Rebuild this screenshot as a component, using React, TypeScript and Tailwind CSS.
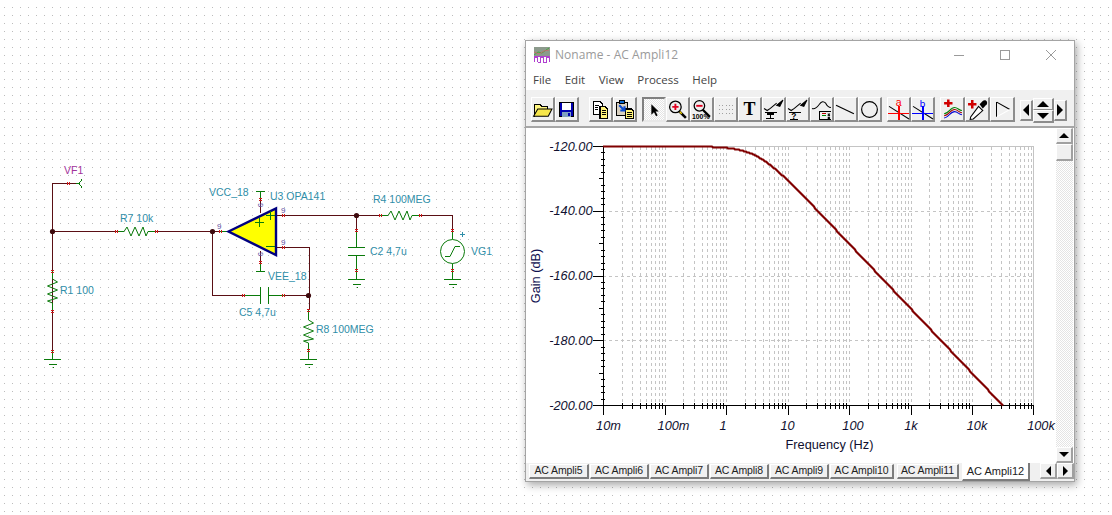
import React from "react";

const WIRE = "#5a0f14";
const GREEN = "#0a7a0a";
const TEAL = "#2f8ea8";

function Pins({ pts }: { pts: [number, number, boolean][] }) {
  return (
    <g stroke="#d01818" strokeWidth="1" shapeRendering="crispEdges">
      {pts.map(([x, y, h], i) =>
        h ? (
          <g key={i}>
            <line x1={x - 1.5} y1={y - 1.5} x2={x - 1.5} y2={y + 1.5} />
            <line x1={x + 0.5} y1={y - 1.5} x2={x + 0.5} y2={y + 1.5} />
          </g>
        ) : (
          <g key={i}>
            <line x1={x - 1.5} y1={y - 1.5} x2={x + 1.5} y2={y - 1.5} />
            <line x1={x - 1.5} y1={y + 0.5} x2={x + 1.5} y2={y + 0.5} />
          </g>
        )
      )}
    </g>
  );
}

function Ground({ x, y }: { x: number; y: number }) {
  return (
    <g stroke={GREEN} strokeWidth="1" shapeRendering="crispEdges">
      <line x1={x - 8.5} y1={y + 0.5} x2={x + 8.5} y2={y + 0.5} />
      <line x1={x - 3.5} y1={y + 5.5} x2={x + 4} y2={y + 5.5} />
      <line x1={x} y1={y + 8} x2={x + 1} y2={y + 8} />
    </g>
  );
}

function Schematic() {
  const w = (d: string) => <path d={d} fill="none" stroke={WIRE} strokeWidth="1" shapeRendering="crispEdges" />;
  const g = (d: string) => <path d={d} fill="none" stroke={GREEN} strokeWidth="1" shapeRendering="crispEdges" />;
  const zz = (d: string) => <path d={d} fill="none" stroke={GREEN} strokeWidth="1" />;
  const Lbl = ({ x, y, c = TEAL, t }: { x: number; y: number; c?: string; t: string }) => (
    <text x={x} y={y} fill={c} fontSize="10.5" fontFamily="'Liberation Sans', Arial, sans-serif">
      {t}
    </text>
  );
  const Nine = ({ x, y }: { x: number; y: number }) => (
    <text x={x} y={y} fill="#5a4aa0" fontSize="8" fontFamily="'Liberation Sans', Arial, sans-serif">
      9
    </text>
  );
  return (
    <svg className="absolute inset-0 w-[1112px] h-[515px]" viewBox="0 0 1112 515">
      <defs>
        <pattern id="dots" x="4" y="7" width="8" height="8" patternUnits="userSpaceOnUse">
          <rect x="0" y="0" width="1" height="1" fill="#bcbcbc" />
        </pattern>
      </defs>
      <rect width="1112" height="515" fill="url(#dots)" />

      {w("M76.5 183.5H52.5V351")}
      {w("M52.5 231.5H117")}
      {w("M156 231.5H220")}
      {w("M212.5 231.5V295.5H244")}
      {w("M284 295.5H309.5")}
      {w("M276 215.5H380")}
      {w("M420 215.5H452.5V231")}
      {w("M356.5 215.5V231")}
      {w("M276 247.5H309.5V310")}
      {w("M260.5 199V213")}
      {w("M260.5 251V263")}
      {w("M52.5 231V271")}
      {g("M76 183.5H80M82 179.5L79 183.5L82 187.5")}
      {g("M117 231.5H124M148 231.5H156")}
      {zz("M124 231.5L127 227L131 236L135 227L139 236L143 227L146 236L148 231.5")}
      {g("M52.5 271V279M52.5 303V311M52.5 351V359")}
      {zz("M52.5 279L57.5 282L47.5 286L57.5 290L47.5 294L57.5 298L47.5 301L52.5 303")}
      {g("M220 231.5H229")}
      {g("M260.5 191V199M260.5 263V271M256 191.5H265M256 271.5H265")}
      {g("M244 295.5H260.5M260.5 287V304M268.5 287V304M268.5 295.5H284")}
      {g("M380 215.5H388M412 215.5H420")}
      {zz("M388 215.5L391 211L395 220L399 211L403 220L407 211L410 220L412 215.5")}
      {g("M356.5 231V247M347.5 247.5H365M347.5 255.5H365M356.5 255V279")}
      <Ground x={356.5} y={279} />
      {g("M452.5 231V239M452.5 263V279")}
      <circle cx="452.5" cy="251.5" r="12" fill="#fff" stroke={GREEN} strokeWidth="1" />
      <path d="M445 256.5H450L455 246.5H460" fill="none" stroke={GREEN} strokeWidth="1" />
      <path d="M459.5 234.5H464.5M462 232V237" stroke="#2f8ea8" strokeWidth="1" shapeRendering="crispEdges" />
      <Ground x={452.5} y={279} />
      {g("M308.5 310V320M308.5 343V351")}
      {zz("M308.5 320L313.5 323L303.5 327L313.5 331L303.5 335L313.5 339L303.5 341L308.5 343")}
      {g("M308.5 351V359")}
      <Ground x={308.5} y={359} />
      <Ground x={52.5} y={359} />

      <polygon points="228.5,231.5 276,208.5 276,255" fill="#ffff00" stroke="#000080" strokeWidth="2.4" strokeLinejoin="miter" />
      <path d="M255 222.5H264M259.5 218V227M266 215.5H275M270.5 211V220M266 246.5H275" stroke={GREEN} strokeWidth="1" shapeRendering="crispEdges" />

      <circle cx="52.5" cy="231.5" r="2.6" fill="#3e0a0e" />
      <circle cx="212.5" cy="231.5" r="2.6" fill="#3e0a0e" />
      <circle cx="356.5" cy="215.5" r="2.6" fill="#3e0a0e" />
      <circle cx="308.5" cy="295.5" r="2.6" fill="#3e0a0e" />

      <Pins
        pts={[
          [69, 183.5, true],
          [117, 231.5, true],
          [157, 231.5, true],
          [221, 231.5, true],
          [244, 295.5, true],
          [284, 295.5, true],
          [284, 215.5, true],
          [284, 247.5, true],
          [381, 215.5, true],
          [421, 215.5, true],
          [52.5, 271.5, false],
          [52.5, 311.5, false],
          [52.5, 351.5, false],
          [260.5, 199.5, false],
          [260.5, 263, false],
          [356.5, 231, false],
          [356.5, 271, false],
          [452.5, 231, false],
          [452.5, 271, false],
          [308.5, 311, false],
          [308.5, 351, false],
        ]}
      />

      <Lbl x={64} y={174} c="#a2329a" t="VF1" />
      <Lbl x={120} y={222} t="R7 10k" />
      <Lbl x={209} y={196} t="VCC_18" />
      <Lbl x={270} y={200} t="U3 OPA141" />
      <Lbl x={373} y={203} t="R4 100MEG" />
      <Lbl x={471} y={255} t="VG1" />
      <Lbl x={370} y={255} t="C2 4,7u" />
      <Lbl x={268} y={280} t="VEE_18" />
      <Lbl x={239} y={316} t="C5 4,7u" />
      <Lbl x={316} y={333} t="R8 100MEG" />
      <Lbl x={60} y={294} t="R1 100" />
      <Nine x={217} y={229} />
      <Nine x={281} y={213} />
      <Nine x={281} y={245} />
      <g transform="translate(258 203) rotate(90)">
        <Nine x={0} y={0} />
      </g>
      <g transform="translate(258 252) rotate(90)">
        <Nine x={0} y={0} />
      </g>
    </svg>
  );
}

function AppIcon() {
  return (
    <svg width="16" height="16" viewBox="0 0 16 16" shapeRendering="crispEdges">
      <rect x="0" y="0" width="16" height="9" fill="#8c9a8c" />
      <rect x="0" y="9" width="16" height="7" fill="#fff" />
      <path d="M0 8L4 5L8 6L15 1" fill="none" stroke="#3fae3f" strokeWidth="1" shapeRendering="auto" />
      <path d="M0 5L5 7L10 4L15 3" fill="none" stroke="#c07070" strokeWidth="1" shapeRendering="auto" />
      <path d="M0.5 15V10.5H3.5V15M3.5 15H6.5V10.5H9.5V15H12.5V10.5H15.5V15" fill="none" stroke="#b040d0" strokeWidth="1" />
      <rect x="0" y="9" width="16" height="1" fill="#b040d0" />
    </svg>
  );
}

function Caption() {
  return (
    <svg width="102" height="12" viewBox="0 0 102 12" stroke="#9a9a9a" fill="none" strokeWidth="1" shapeRendering="crispEdges">
      <path d="M0 6.5H10" />
      <rect x="46" y="1.5" width="9" height="9" />
      <path d="M92 1L102 11M102 1L92 11" shapeRendering="auto" />
    </svg>
  );
}

const Ico = ({ children }: { children: React.ReactNode }) => (
  <svg width="21" height="21" viewBox="0 0 20 20" fill="none" className="shrink-0 overflow-visible">
    {children}
  </svg>
);

function Btn({ children, w = "w-[24px]", pressed = false }: { children?: React.ReactNode; w?: string; pressed?: boolean }) {
  return (
    <div
      className={
        pressed
          ? `${w} h-[25px] flex items-center justify-center border-2 border-t-[#808080] border-l-[#808080] border-r-[#e8e8e8] border-b-[#e8e8e8] bg-[repeating-conic-gradient(#e4e4e4_0%_25%,#ffffff_0%_50%)] bg-size-[2px_2px]`
          : `${w} h-[25px] flex items-center justify-center bg-[#f0f0f0] border-t border-l border-t-white border-l-white border-r-2 border-b-2 border-r-[#8c8c8c] border-b-[#8c8c8c]`
      }
    >
      {children}
    </div>
  );
}

const crisp = { shapeRendering: "crispEdges" as const };

function Toolbar() {
  return (
    <div className="flex items-start h-[38px] shrink-0 pt-[7px] pl-[5px] bg-[#f0f0f0] border-b-2 border-b-[#a6a6a6] mt-[2px]">
      <Btn>
        <Ico>
          <path d="M2.5 5.5H8L10 7.5H15V10H6L2.5 16Z" fill="#fff680" stroke="#000" {...crisp} />
          <path d="M5.5 9.5H19L15.5 16.5H1.5Z" fill="#f6e64a" stroke="#000" />
        </Ico>
      </Btn>
      <Btn>
        <Ico>
          <rect x="3" y="3" width="14" height="14" fill="#0000b0" stroke="#000" {...crisp} />
          <rect x="6" y="4" width="8" height="6" fill="#fff" {...crisp} />
          <rect x="6" y="12" width="8" height="5" fill="#80a0c0" {...crisp} />
          <rect x="11" y="13" width="2" height="3" fill="#0000b0" {...crisp} />
        </Ico>
      </Btn>
      <div className="w-[10px]" />
      <Btn>
        <Ico>
          <path d="M3.5 2.5H9.5L11.5 4.5V14.5H3.5Z" fill="#fff" stroke="#000" {...crisp} />
          <path d="M9.5 7.5H14.5L16.5 9.5V18.5H9.5Z" fill="#fff27a" stroke="#000" {...crisp} />
          <path d="M5 6H9M5 8H8M5 10H8M11 11H15M11 13H15M11 15H15" stroke="#000" {...crisp} />
        </Ico>
      </Btn>
      <Btn>
        <Ico>
          <path d="M2.5 3.5H12.5V15.5H2.5Z" fill="#d8d0c0" stroke="#000" {...crisp} />
          <rect x="5" y="1" width="5" height="3" fill="#0a6ad0" stroke="#000" {...crisp} />
          <path d="M10.5 9.5H16.5L18.5 11.5V18.5H10.5Z" fill="#fff27a" stroke="#000" {...crisp} />
          <path d="M12 13H17M12 15H17M12 17H17" stroke="#000" {...crisp} />
          <path d="M5 6L10 11M10 7V11H6" stroke="#0a4ad0" strokeWidth="2" />
        </Ico>
      </Btn>
      <div className="w-[5px]" />
      <Btn pressed>
        <Ico>
          <path d="M7 5V15L9.5 12.5L11.5 16.5L13 15.5L11 12H14Z" fill="#000" />
        </Ico>
      </Btn>
      <Btn>
        <Ico>
          <path d="M11 11L18 18" stroke="#000" strokeWidth="2.4" />
          <path d="M12 12L14 14" stroke="#f0d000" strokeWidth="1.4" />
          <circle cx="8" cy="7.5" r="5.5" fill="#eee" stroke="#000" strokeWidth="1.2" />
          <path d="M5 7.5H11M8 4.5V10.5" stroke="#e00020" strokeWidth="1.8" />
        </Ico>
      </Btn>
      <Btn>
        <Ico>
          <path d="M11 10L18 17" stroke="#000" strokeWidth="2.2" />
          <circle cx="8" cy="6.5" r="5" fill="#eee" stroke="#000" strokeWidth="1.2" />
          <path d="M5 6.5H11" stroke="#e00020" strokeWidth="1.8" />
          <text x="1" y="19.5" fontSize="6.5" fontWeight="700" fill="#000" fontFamily="'Liberation Sans', sans-serif">
            100%
          </text>
        </Ico>
      </Btn>
      <Btn>
        <Ico>
          <path d="M4 6h1M7 6h1M10 6h1M13 6h1M16 6h1M4 10h1M7 10h1M10 10h1M13 10h1M16 10h1M4 14h1M7 14h1M10 14h1M13 14h1M16 14h1" stroke="#a0a0a0" {...crisp} />
        </Ico>
      </Btn>
      <Btn>
        <span className="font-['Liberation_Serif',serif] font-bold text-[18px] leading-none text-black">T</span>
      </Btn>
      <Btn>
        <Ico>
          <path d="M1 9L4 11L7 9L13 4" stroke="#000" />
          <path d="M13 6L19 1L16 7Z" fill="#000" stroke="#000" />
          <path d="M2 12.5H13" stroke="#000" {...crisp} />
          <path d="M3 18.5H10" stroke="#000" {...crisp} />
          <path d="M4 14.5H10M7 14V18" stroke="#000" strokeWidth="1.4" {...crisp} />
        </Ico>
      </Btn>
      <Btn>
        <Ico>
          <path d="M1 9L4 11L7 9L13 4" stroke="#000" />
          <path d="M13 6L19 1L16 7Z" fill="#000" stroke="#000" />
          <path d="M2 12.5H13" stroke="#000" {...crisp} />
          <path d="M3 19.5H10" stroke="#000" {...crisp} />
          <text x="4" y="19" fontSize="8" fontWeight="700" fill="#000" fontFamily="'Liberation Sans', sans-serif">
            ?
          </text>
        </Ico>
      </Btn>
      <Btn>
        <Ico>
          <path d="M1 9C3 10 5 9 8 5C10 2 12 2 14 4C15 6 17 8 19 8" stroke="#000" />
          <path d="M8.5 11.5H19M8.5 11.5V19.5H19" stroke="#000" {...crisp} />
          <path d="M10 14H14" stroke="#c00000" {...crisp} />
          <path d="M10 16H14" stroke="#008000" {...crisp} />
          <path d="M16 14l2 2M18 14l-2 2M16 17l2 2M18 17l-2 2" stroke="#000" />
        </Ico>
      </Btn>
      <Btn>
        <Ico>
          <path d="M1 6L18 14" stroke="#000" strokeWidth="1.1" />
        </Ico>
      </Btn>
      <Btn>
        <Ico>
          <circle cx="10" cy="10" r="7.5" stroke="#000" strokeWidth="1.1" />
        </Ico>
      </Btn>
      <div className="w-[5px]" />
      <Btn>
        <Ico>
          <path d="M1 7L20 19" stroke="#000" />
          <path d="M0 13.5H20" stroke="#ff0000" strokeWidth="1.2" {...crisp} />
          <path d="M10.5 7V20" stroke="#ff0000" strokeWidth="1.2" {...crisp} />
          <text x="7.5" y="7" fontSize="10" fill="#ff0000" fontFamily="'Liberation Sans', sans-serif">
            a
          </text>
        </Ico>
      </Btn>
      <Btn>
        <Ico>
          <path d="M1 7L20 19" stroke="#000" />
          <path d="M0 13.5H20" stroke="#0000ff" strokeWidth="1.2" {...crisp} />
          <path d="M10.5 7V20" stroke="#0000ff" strokeWidth="1.2" {...crisp} />
          <text x="7.5" y="7.5" fontSize="9.5" fill="#0000ff" fontFamily="'Liberation Sans', sans-serif">
            b
          </text>
        </Ico>
      </Btn>
      <div className="w-[5px]" />
      <Btn w="w-[25px]">
        <Ico>
          <path d="M2 4H10M6 0.5V7.5" stroke="#d00000" strokeWidth="2.4" />
          <path d="M2 14C6 14 8 8 12 8C15 8 16 11 19 11" stroke="#008000" />
          <path d="M2 16C6 16 8 10 12 10C15 10 16 13 19 13" stroke="#a00000" />
          <path d="M2 18C6 18 8 12 12 12C15 12 16 15 19 15" stroke="#0000d0" />
        </Ico>
      </Btn>
      <Btn w="w-[25px]">
        <Ico>
          <path d="M1 5H9M5 1V9" stroke="#d00000" strokeWidth="2.4" />
          <path d="M11 7L15 11L6 19L3 19.5L3.5 17Z" fill="#fff" stroke="#000" />
          <path d="M12 5L15 2C16 1 18 1 19 2.5C19.5 4 19 5 18 6L15 9Z" fill="#000" />
        </Ico>
      </Btn>
      <Btn w="w-[25px]">
        <Ico>
          <path d="M4.5 3V17" stroke="#000" {...crisp} />
          <path d="M4.5 3L17 10" stroke="#000" />
          <path d="M4.5 17L17 10" stroke="#fff" />
        </Ico>
      </Btn>
      <div className="w-[5px]" />
      <div className="flex items-center h-[25px] pt-[1px]">
        <div className="w-[13px] h-[21px] flex items-center justify-center bg-[#f0f0f0] border-t border-l border-white border-r-2 border-b-2 border-r-[#8c8c8c] border-b-[#8c8c8c]">
          <div className="w-0 h-0 border-y-[6px] border-y-transparent border-r-[6px] border-r-black" />
        </div>
        <div className="flex flex-col w-[21px] h-[25px]">
          <div className="h-[12px] flex items-center justify-center bg-[#f0f0f0] border-t border-l border-white border-r-2 border-b border-r-[#8c8c8c] border-b-[#8c8c8c]">
            <div className="w-0 h-0 border-x-[6px] border-x-transparent border-b-[6px] border-b-black" />
          </div>
          <div className="h-[13px] flex items-center justify-center bg-[#f0f0f0] border-t border-l border-white border-r-2 border-b-2 border-r-[#8c8c8c] border-b-[#8c8c8c]">
            <div className="w-0 h-0 border-x-[6px] border-x-transparent border-t-[6px] border-t-black" />
          </div>
        </div>
        <div className="w-[13px] h-[21px] flex items-center justify-center bg-[#f0f0f0] border-t border-l border-white border-r-2 border-b-2 border-r-[#8c8c8c] border-b-[#8c8c8c]">
          <div className="w-0 h-0 border-y-[6px] border-y-transparent border-l-[6px] border-l-black" />
        </div>
      </div>
    </div>
  );
}

function Chart() {
  const X = (lf: number) => 603 + 61.5 * (lf + 2);
  const dbY = (db: number) => 146 + (-120 - db) * 3.2375;
  const minors: number[] = [];
  for (let d = -2; d < 5; d++) for (let k = 2; k <= 9; k++) minors.push(X(d + Math.log10(k)));
  const majors = [-1, 0, 1, 2, 3, 4].map(X);
  const pts: string[] = [];
  for (let x = 603; x <= 1003.5; x += 1) {
    const f = Math.pow(10, (x - 603) / 61.5 - 2);
    const db = -120 - 10 * Math.log10(1 + (f / 3.16) * (f / 3.16));
    pts.push(`${x},${Math.round(dbY(db)) + 0.5}`);
  }
  const smallY: number[] = [];
  for (let i = 0; i <= 40; i++) smallY.push(146 + i * 6.475);
  const tx = "'Liberation Sans', Arial, sans-serif";
  return (
    <svg className="w-[530px] h-[335px] block" viewBox="526 128 530 335">
      <g stroke="#c4c4c4" strokeWidth="1" strokeDasharray="3 3" shapeRendering="crispEdges">
        {[...minors, ...majors].map((x, i) => (
          <line key={i} x1={Math.round(x) + 0.5} y1="147" x2={Math.round(x) + 0.5} y2="405" />
        ))}
        {[-140, -160, -180].map((d) => (
          <line key={d} x1="603" y1={Math.round(dbY(d)) + 0.5} x2="1033" y2={Math.round(dbY(d)) + 0.5} />
        ))}
      </g>
      <g stroke="#c4c4c4" strokeWidth="1" shapeRendering="crispEdges">
        <line x1="603" y1="146.5" x2="1034" y2="146.5" />
        <line x1="1033.5" y1="146" x2="1033.5" y2="405" />
      </g>
      <g stroke="#000" strokeWidth="1" shapeRendering="crispEdges">
        <line x1="603.5" y1="146" x2="603.5" y2="415" />
        <line x1="593" y1="405.5" x2="1034" y2="405.5" />
        {smallY.map((y, i) => {
          const ry = Math.round(y) + 0.5;
          if (i % 10 === 0) return <line key={i} x1="593" y1={ry} x2="604" y2={ry} />;
          if (i % 5 === 0) return <line key={i} x1="599" y1={ry} x2="604" y2={ry} />;
          return <line key={i} x1="601" y1={ry} x2="605" y2={ry} />;
        })}
        {minors.map((x, i) => (
          <line key={i} x1={Math.round(x) + 0.5} y1="403" x2={Math.round(x) + 0.5} y2="409" />
        ))}
        {majors.map((x, i) => (
          <line key={i} x1={Math.round(x) + 0.5} y1="405" x2={Math.round(x) + 0.5} y2="415" />
        ))}
        <line x1="1033.5" y1="405" x2="1033.5" y2="415" />
      </g>
      <polyline points={pts.join(" ")} fill="none" stroke="#800000" strokeWidth="2.2" strokeLinejoin="round" />
      <g fontFamily={tx} fontSize="12.75" fontStyle="italic" fill="#101030" textAnchor="end">
        {[-120, -140, -160, -180, -200].map((d) => (
          <text key={d} x="592.5" y={dbY(d) + 4.5}>
            {`${d}.00`}
          </text>
        ))}
      </g>
      <g fontFamily={tx} fontSize="12.75" fontStyle="italic" fill="#101030" textAnchor="middle">
        {(
          [
            ["10m", 608.5],
            ["100m", 673.5],
            ["1", 723],
            ["10", 787.5],
            ["100", 853],
            ["1k", 911],
            ["10k", 977],
            ["100k", 1041],
          ] as [string, number][]
        ).map(([t, x]) => (
          <text key={t} x={x} y="430">
            {t}
          </text>
        ))}
      </g>
      <text x="829.5" y="449" fontFamily={tx} fontSize="12.75" fill="#101030" textAnchor="middle">
        Frequency (Hz)
      </text>
      <text
        transform="translate(540 276) rotate(-90)"
        fontFamily={tx}
        fontSize="12.75"
        fill="#101050"
        textAnchor="middle"
      >
        Gain (dB)
      </text>
    </svg>
  );
}

function ScrollBtn({ dir, h = "h-[16px]", w = "w-[17px]" }: { dir: "up" | "down" | "left" | "right"; h?: string; w?: string }) {
  const arrow =
    dir === "up"
      ? "border-x-[5px] border-x-transparent border-b-[5px] border-b-black"
      : dir === "down"
        ? "border-x-[5px] border-x-transparent border-t-[5px] border-t-black"
        : dir === "left"
          ? "border-y-[5px] border-y-transparent border-r-[5px] border-r-black"
          : "border-y-[5px] border-y-transparent border-l-[5px] border-l-black";
  return (
    <div className={`${w} ${h} shrink-0 flex items-center justify-center bg-[#f0f0f0] border-t border-l border-white border-r-2 border-b-2 border-r-[#a0a0a0] border-b-[#a0a0a0]`}>
      <div className={`w-0 h-0 ${arrow}`} />
    </div>
  );
}

function Tab({ label, w }: { label: string; w: string }) {
  return (
    <div className={`${w} h-[15px] pb-[1px] flex items-center justify-center bg-[#f0f0f0] border-t border-l border-white border-r-2 border-b-2 border-r-[#7c7c7c] border-b-[#7c7c7c] text-[10.5px] leading-none tracking-[-0.1px] text-[#222]`}>
      {label}
    </div>
  );
}

export default function App() {
  return (
    <div className="relative w-[1112px] h-[515px] overflow-hidden bg-white font-['Liberation_Sans',Arial,sans-serif]">
      <Schematic />
      <div className="absolute left-[525px] top-[40px] w-[550px] h-[442px] flex flex-col bg-white border border-[#a4a4a4] shadow-[2px_3px_8px_rgba(0,0,0,0.35)]">
        <div className="h-[28px] shrink-0 flex items-center pl-[8px] pr-[17px]">
          <AppIcon />
          <span className="ml-[5px] font-['Open_Sans',sans-serif] text-[12px] text-[#9a9a9a] tracking-[0.05px]">Noname - AC Ampli12</span>
          <div className="ml-auto -translate-x-[1px]">
            <Caption />
          </div>
        </div>
        <div className="h-[19px] shrink-0 flex items-center gap-[13.5px] pl-[7px] pt-[2px] font-['Open_Sans',sans-serif] text-[11.5px] text-[#444]">
          <span>File</span>
          <span>Edit</span>
          <span>View</span>
          <span>Process</span>
          <span>Help</span>
        </div>
        <Toolbar />
        <div className="flex h-[335px] shrink-0">
          <Chart />
          <div className="w-[17px] h-[335px] flex flex-col">
            <ScrollBtn dir="up" />
            <div className="w-[17px] h-[17px] shrink-0 bg-[#f0f0f0] border-t border-l border-white border-r-2 border-b-2 border-r-[#a0a0a0] border-b-[#a0a0a0]" />
            <div className="flex-1 bg-[repeating-conic-gradient(#e4e4e4_0%_25%,#ffffff_0%_50%)] bg-size-[2px_2px]" />
            <ScrollBtn dir="down" />
          </div>
        </div>
        <div className="flex-1 flex items-start bg-[#f0f0f0] pl-[3px] relative">
          <div className="flex gap-[1px] pt-[1px]">
            <Tab label="AC Ampli5" w="w-[60px]" />
            <Tab label="AC Ampli6" w="w-[59px]" />
            <Tab label="AC Ampli7" w="w-[59px]" />
            <Tab label="AC Ampli8" w="w-[59px]" />
            <Tab label="AC Ampli9" w="w-[59px]" />
            <Tab label="AC Ampli10" w="w-[64px]" />
            <div className="w-[1px]" />
            <Tab label="AC Ampli11" w="w-[62px]" />
            <div className="w-[1px]" />
            <div className="w-[68px] h-[18px] -mt-[1px] flex items-center justify-center bg-white border-l border-white border-r-2 border-b-2 border-r-[#7c7c7c] border-b-[#7c7c7c] text-[11px] leading-none text-[#222]">
              AC Ampli12
            </div>
          </div>
          <div className="ml-auto flex">
            <ScrollBtn dir="left" />
            <ScrollBtn dir="right" />
          </div>
        </div>
      </div>
    </div>
  );
}
